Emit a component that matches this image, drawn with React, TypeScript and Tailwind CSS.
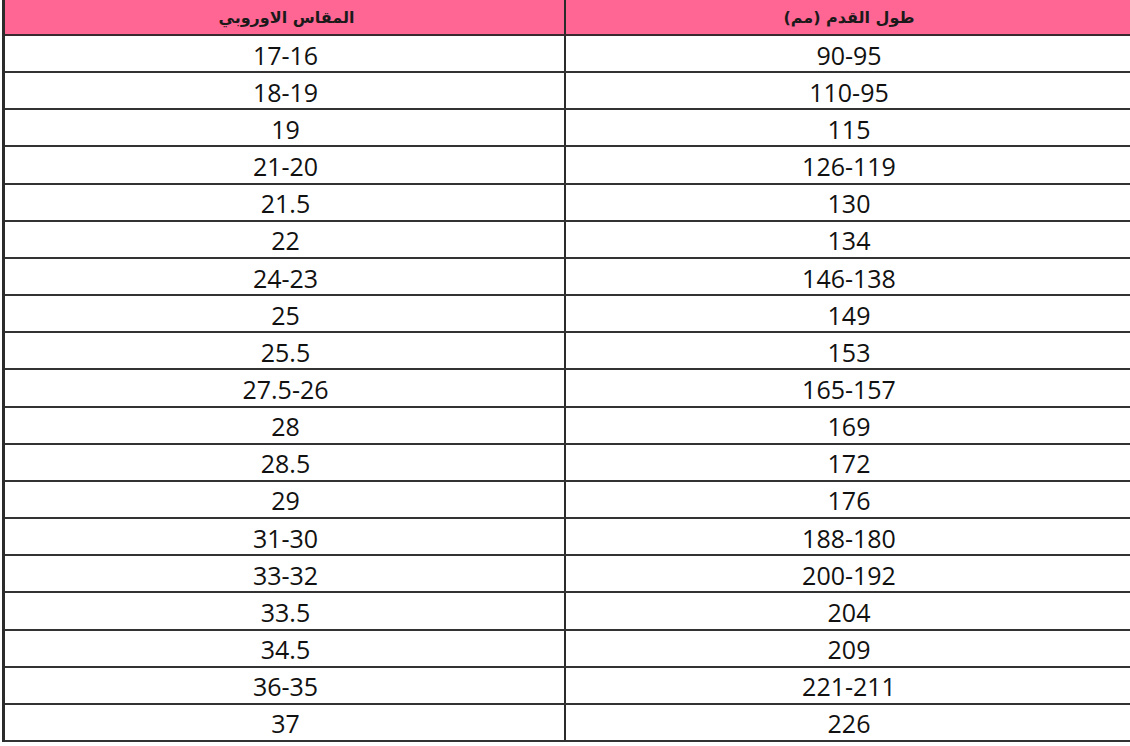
import React from "react";

const rows: [string, string][] = [
  ["17-16", "90-95"],
  ["18-19", "110-95"],
  ["19", "115"],
  ["21-20", "126-119"],
  ["21.5", "130"],
  ["22", "134"],
  ["24-23", "146-138"],
  ["25", "149"],
  ["25.5", "153"],
  ["27.5-26", "165-157"],
  ["28", "169"],
  ["28.5", "172"],
  ["29", "176"],
  ["31-30", "188-180"],
  ["33-32", "200-192"],
  ["33.5", "204"],
  ["34.5", "209"],
  ["36-35", "221-211"],
  ["37", "226"],
];

const App = () => {
  return (
    <div className="w-[1130px] h-[746px] bg-white overflow-hidden">
      <div className="ml-[2px] w-[1140px] border-l-[3px] border-[#2b2b2b]">
        {/* header */}
        <div className="grid grid-cols-[561px_1fr] h-[36px] bg-[#ff6694] border-b-2 border-[#3a2a30]">
          <div
            dir="rtl"
            className="flex items-start justify-center pt-[6px] pl-[4px] border-r-2 border-[#2b2b2b] text-[16px] font-bold text-[#1a1a1a] font-['DejaVu_Sans',sans-serif]"
          >
            المقاس الاوروبي
          </div>
          <div
            dir="rtl"
            className="flex items-start justify-center pt-[6px] pr-[10px] text-[16px] font-bold text-[#1a1a1a] font-['DejaVu_Sans',sans-serif]"
          >
            طول القدم (مم)
          </div>
        </div>
        {/* body */}
        {rows.map(([eu, mm], i) => (
          <div
            key={i}
            className="grid grid-cols-[561px_1fr] h-[37.16px] border-b-2 border-[#333] text-[25px] font-medium leading-none text-[#111] font-['Open_Sans',sans-serif]"
          >
            <div className="flex items-center justify-center pt-[3px] pl-[2px] border-r-2 border-[#2b2b2b]">
              {eu}
            </div>
            <div className="flex items-center justify-center pt-[3px] pr-[10px]">{mm}</div>
          </div>
        ))}
      </div>
    </div>
  );
};

export default App;
